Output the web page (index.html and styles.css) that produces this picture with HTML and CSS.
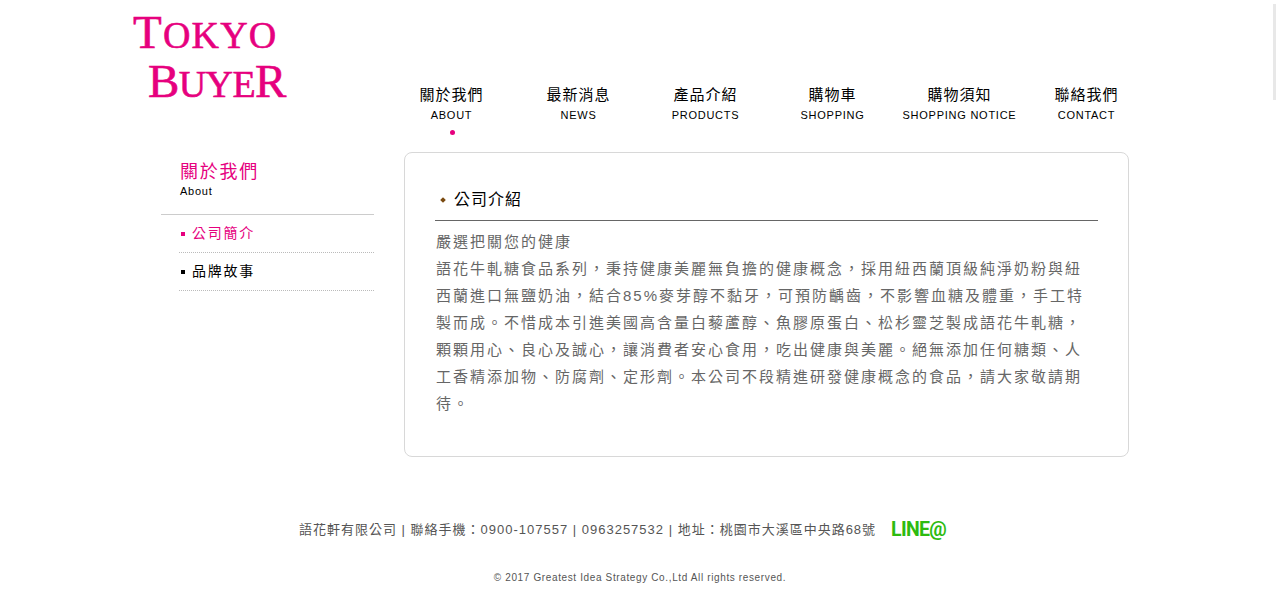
FILE: index.html
```html
<!DOCTYPE html>
<html lang="zh-Hant">
<head>
<meta charset="utf-8">
<title>語花軒</title>
<link rel="stylesheet" href="styles.css">
</head>
<body>
<div class="scrollthumb"></div>
<header class="header">
  <a class="logo" href="#">
    <span class="logo-line"><b>T</b>OKYO</span>
    <span class="logo-line logo-second"><b>B</b>UYE<b>R</b></span>
  </a>
  <nav class="nav">
    <a class="nav-item active" href="#"><span class="zh">關於我們</span><span class="en">ABOUT</span></a>
    <a class="nav-item" href="#"><span class="zh">最新消息</span><span class="en">NEWS</span></a>
    <a class="nav-item" href="#"><span class="zh">產品介紹</span><span class="en">PRODUCTS</span></a>
    <a class="nav-item" href="#"><span class="zh">購物車</span><span class="en">SHOPPING</span></a>
    <a class="nav-item" href="#"><span class="zh">購物須知</span><span class="en">SHOPPING NOTICE</span></a>
    <a class="nav-item" href="#"><span class="zh">聯絡我們</span><span class="en">CONTACT</span></a>
  </nav>
</header>
<div class="content">
  <aside class="side">
    <div class="side-head">
      <h2>關於我們</h2>
      <p>About</p>
    </div>
    <ul class="side-menu">
      <li class="current"><a href="#">公司簡介</a></li>
      <li><a href="#">品牌故事</a></li>
    </ul>
  </aside>
  <main class="panel">
    <h1 class="panel-title"><span class="diamond"></span>公司介紹</h1>
    <div class="panel-body">嚴選把關您的健康<br>語花牛軋糖食品系列，秉持健康美麗無負擔的健康概念，採用紐西蘭頂級純淨奶粉與紐西蘭進口無鹽奶油，結合85%麥芽醇不黏牙，可預防齲齒，不影響血糖及體重，手工特製而成。不惜成本引進美國高含量白藜蘆醇、魚膠原蛋白、松杉靈芝製成語花牛軋糖，顆顆用心、良心及誠心，讓消費者安心食用，吃出健康與美麗。絕無添加任何糖類、人工香精添加物、防腐劑、定形劑。本公司不段精進研發健康概念的食品，請大家敬請期待。</div>
  </main>
</div>
<footer class="footer">
  <div class="contact"><span>語花軒有限公司 | 聯絡手機：0900-107557 | 0963257532 | 地址：桃園市大溪區中央路68號</span><span class="line">LINE@</span></div>
  <p class="copy">© 2017 Greatest Idea Strategy Co.,Ltd All rights reserved.</p>
</footer>
</body>
</html>
```
FILE: styles.css
```css
* { box-sizing: border-box; }
html, body { margin: 0; padding: 0; height: 605px; overflow: hidden; background: #fff; }
body { font-family: "Liberation Sans", "Noto Sans CJK TC", sans-serif; color: #000; }
a { color: inherit; text-decoration: none; }
h1, h2, p, ul { margin: 0; padding: 0; }
ul { list-style: none; }

.scrollthumb { position: absolute; left: 1273px; top: 4px; width: 3px; height: 96px; background: #e8e8e8; }

.header { display: flex; height: 152px; padding-left: 133px; }
.logo { width: 255px; padding-top: 8px; font-family: "Liberation Serif", serif; color: #e6007e; display: block; -webkit-text-stroke: 0.6px #e6007e; }
.logo-line { display: block; font-size: 38px; line-height: 48px; letter-spacing: 1.2px; white-space: nowrap; }
.logo-line b { font-weight: normal; font-size: 47px; }
.logo-second { padding-left: 15px; letter-spacing: -0.6px; margin-top: -2px; }

.nav { display: flex; padding-top: 85px; }
.nav-item { width: 127px; height: 67px; display: flex; flex-direction: column; align-items: center; position: relative; }
.nav-item .zh { font-size: 15px; line-height: 20px; letter-spacing: 1px; }
.nav-item .en { font-size: 11px; line-height: 14px; letter-spacing: 0.75px; margin-top: 3px; }
.nav-item.active::after { content: ""; position: absolute; left: 62px; top: 45px; width: 5px; height: 5px; border-radius: 50%; background: #e6007e; }

.content { display: flex; padding-left: 161px; }
.side { width: 213px; margin-right: 30px; }
.side-head { height: 63px; padding: 9px 0 0 19px; border-bottom: 1px solid #ccc; }
.side-head h2 { font-size: 18px; line-height: 22px; font-weight: normal; color: #e6007e; letter-spacing: 1.75px; }
.side-head p { font-size: 11px; line-height: 14px; letter-spacing: 0.75px; margin-top: 1px; }
.side-menu { margin-left: 18px; }
.side-menu li { height: 38px; border-bottom: 1px dotted #bbb; font-size: 14px; line-height: 37px; letter-spacing: 1.75px; padding-left: 13px; position: relative; }
.side-menu li::before { content: ""; position: absolute; left: 2px; top: 17px; width: 4px; height: 4px; background: #000; }
.side-menu li.current { color: #e6007e; }
.side-menu li.current::before { background: #e6007e; }

.panel { width: 725px; height: 305px; border: 1px solid #d8d8d8; border-radius: 8px; padding: 30px 30px 0; }
.panel-title { font-size: 16px; font-weight: normal; line-height: 30px; height: 38px; border-bottom: 1px solid #666; letter-spacing: 1px; display: flex; align-items: center; padding: 0 0 4px 6px; }
.diamond { width: 4px; height: 4px; background: #7a4a10; transform: rotate(45deg); margin-right: 9px; }
.panel-body { margin-top: 7px; padding-left: 1px; font-size: 15px; line-height: 27px; letter-spacing: 2px; color: #666; }

.footer { margin-top: 60px; text-align: center; }
.contact { font-size: 13px; line-height: 26px; letter-spacing: 1px; color: #555; display: flex; justify-content: center; align-items: center; height: 26px; padding-right: 35px; }
.line { font-family: Roboto, "Liberation Sans", sans-serif; font-size: 19.5px; font-weight: bold; color: #2dbb10; letter-spacing: -0.7px; margin-left: 15px; }
.copy { margin-top: 28px; font-size: 10px; line-height: 14px; letter-spacing: 0.63px; color: #555; }
```
